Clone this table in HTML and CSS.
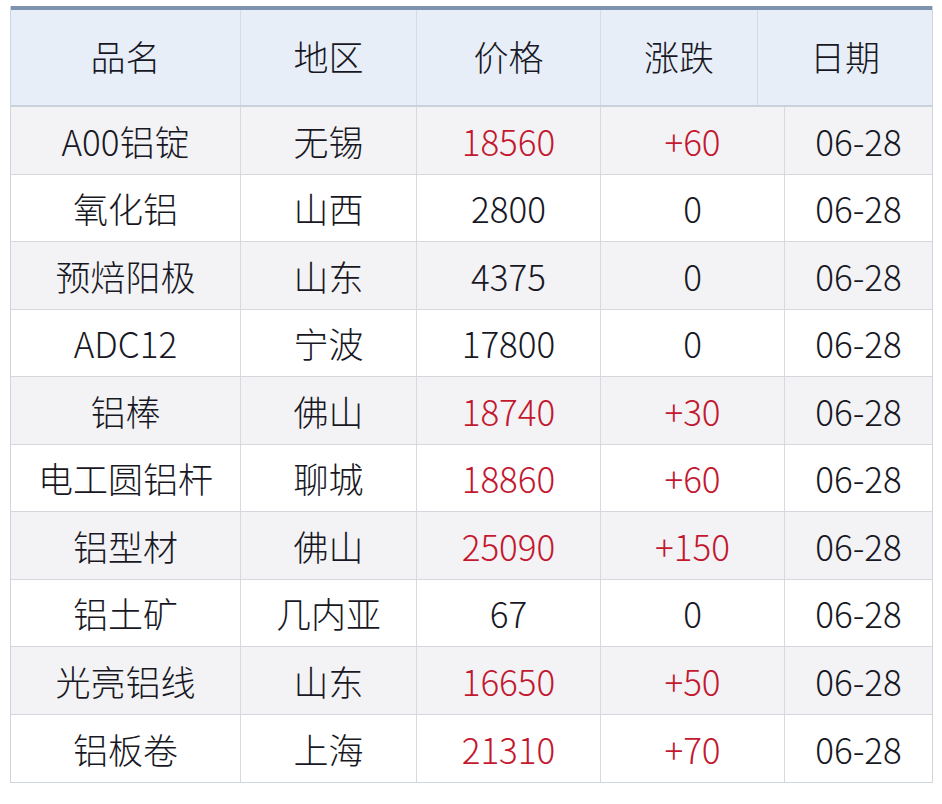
FILE: index.html
```html
<!DOCTYPE html>
<html lang="zh-CN">
<head>
<meta charset="utf-8">
<title>铝价格表</title>
<link rel="stylesheet" href="styles.css">
</head>
<body>
<div class="page">
  <div class="table">
    <div class="head">
      <div class="hcell">品名</div>
      <div class="hcell">地区</div>
      <div class="hcell">价格</div>
      <div class="hcell">涨跌</div>
      <div class="hcell last">日期</div>
    </div>
    <div class="body">
      <div class="row odd"><div class="cell">A00铝锭</div><div class="cell">无锡</div><div class="cell up">18560</div><div class="cell up">+60</div><div class="cell last">06-28</div></div>
      <div class="row"><div class="cell">氧化铝</div><div class="cell">山西</div><div class="cell">2800</div><div class="cell">0</div><div class="cell last">06-28</div></div>
      <div class="row odd"><div class="cell">预焙阳极</div><div class="cell">山东</div><div class="cell">4375</div><div class="cell">0</div><div class="cell last">06-28</div></div>
      <div class="row"><div class="cell">ADC12</div><div class="cell">宁波</div><div class="cell">17800</div><div class="cell">0</div><div class="cell last">06-28</div></div>
      <div class="row odd"><div class="cell">铝棒</div><div class="cell">佛山</div><div class="cell up">18740</div><div class="cell up">+30</div><div class="cell last">06-28</div></div>
      <div class="row"><div class="cell">电工圆铝杆</div><div class="cell">聊城</div><div class="cell up">18860</div><div class="cell up">+60</div><div class="cell last">06-28</div></div>
      <div class="row odd"><div class="cell">铝型材</div><div class="cell">佛山</div><div class="cell up">25090</div><div class="cell up">+150</div><div class="cell last">06-28</div></div>
      <div class="row"><div class="cell">铝土矿</div><div class="cell">几内亚</div><div class="cell">67</div><div class="cell">0</div><div class="cell last">06-28</div></div>
      <div class="row odd"><div class="cell">光亮铝线</div><div class="cell">山东</div><div class="cell up">16650</div><div class="cell up">+50</div><div class="cell last">06-28</div></div>
      <div class="row last-row"><div class="cell">铝板卷</div><div class="cell">上海</div><div class="cell up">21310</div><div class="cell up">+70</div><div class="cell last">06-28</div></div>
    </div>
  </div>
</div>
</body>
</html>
```

FILE: styles.css
```css
html, body {
  margin: 0;
  padding: 0;
  background: #ffffff;
}

.page {
  padding: 6px 0 0 10px;
  width: 923px;
  font-family: "Noto Sans CJK SC", "Noto Sans", sans-serif;
  font-size: 35px;
  font-weight: 300;
  color: #181824;
}

.table {
  width: 923px;
  border-left: 1px solid #cfd5dd;
  border-right: 1px solid #cfd5dd;
  border-bottom: 1px solid #cfd5dd;
  box-sizing: border-box;
}

.head {
  display: grid;
  grid-template-columns: 230px 176px 184px 157px 1fr;
  background: #e7eef8;
  border-top: 4px solid #7d92ad;
  border-bottom: 2px solid #c9d1dc;
  height: 101px;
  box-sizing: border-box;
}

.hcell {
  display: flex;
  align-items: center;
  justify-content: center;
  border-right: 1px solid #d3dbe6;
  padding-bottom: 4px;
  box-sizing: border-box;
}

.hcell.last {
  border-right: none;
}

.row {
  display: grid;
  grid-template-columns: 230px 176px 184px 184px 1fr;
  height: 67.5px;
  background: #ffffff;
  border-bottom: 1px solid #d4d7dc;
  box-sizing: border-box;
}

.row.odd {
  background: #f3f3f6;
}

.row.last-row {
  border-bottom: none;
}

.cell {
  display: flex;
  align-items: center;
  justify-content: center;
  border-right: 1px solid #d6d9de;
  box-sizing: border-box;
  line-height: 1;
}

.cell.last {
  border-right: none;
}

.cell.up {
  color: #c3182f;
}
```
